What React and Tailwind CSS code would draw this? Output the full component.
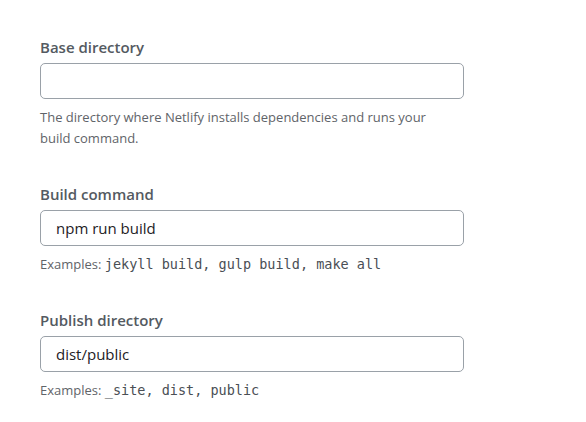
import React from "react"

const sans = "font-['Segoe_UI','Open_Sans','Noto_Sans',sans-serif]"
const mono = "font-['DejaVu_Sans_Mono','Liberation_Mono',monospace]"

const Field = ({ label, value, children }) => (
  <div className="mb-[33px]">
    <label className="block text-[15px] leading-[24px] font-semibold text-[#545a61] mb-[4px]">
      {label}
    </label>
    <input
      readOnly
      value={value}
      className={`block w-[424px] h-[36px] rounded-[5px] border border-[#9aa1a8] bg-white px-[15px] text-[15px] text-[#1e2125] outline-none ${sans}`}
    />
    <div className="mt-[8px] w-[424px] text-[13px] leading-[21px] text-[#5f6469]">{children}</div>
  </div>
)

const Code = ({ children }) => (
  <code className={`${mono} text-[13.5px] text-[#4a4f55]`}>{children}</code>
)

export default function App() {
  return (
    <div className={`min-h-[422px] bg-white px-[40px] pt-[35px] ${sans}`}>
      <Field label="Base directory" value="">
        The directory where Netlify installs dependencies and runs your
        <br />
        build command.
      </Field>
      <Field label="Build command" value="npm run build">
        Examples: <Code>jekyll build, gulp build, make all</Code>
      </Field>
      <Field label="Publish directory" value="dist/public">
        Examples: <Code>_site, dist, public</Code>
      </Field>
    </div>
  )
}
